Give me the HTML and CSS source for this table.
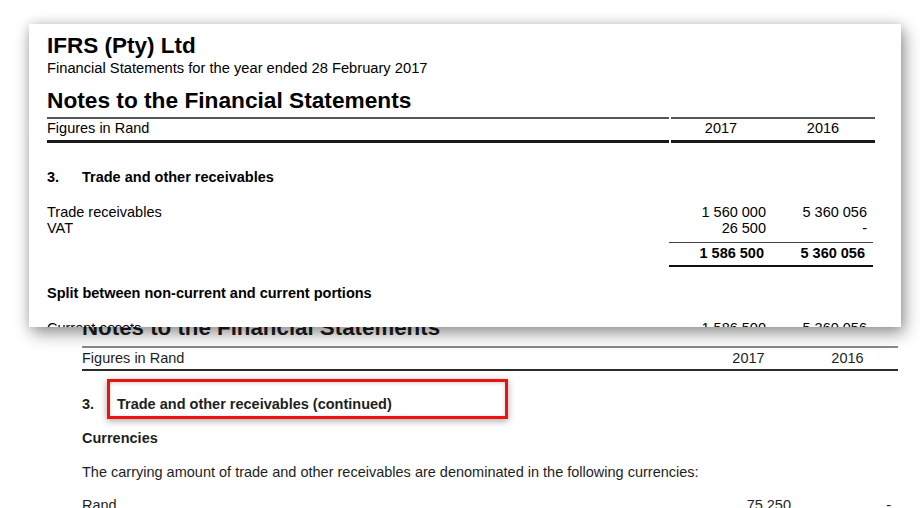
FILE: index.html
```html
<!DOCTYPE html>
<html lang="en">
<head>
<meta charset="utf-8">
<title>Notes to the Financial Statements</title>
<link rel="stylesheet" href="styles.css">
</head>
<body>
<div class="stage">
  <div class="doc back">
    <h2 class="back-title">Notes to the Financial Statements</h2>
    <div class="grid back-head">
      <div class="c1">Figures in Rand</div>
      <div class="c2 yr">2017</div>
      <div class="c3 yr">2016</div>
    </div>
    <div class="note-title back-note"><span class="num">3.</span><span>Trade and other receivables (continued)</span></div>
    <div class="sub back-sub">Currencies</div>
    <p class="para">The carrying amount of trade and other receivables are denominated in the following currencies:</p>
    <div class="grid back-row">
      <div class="c1">Rand</div>
      <div class="c2 n">75 250</div>
      <div class="c3 n">-</div>
    </div>
    <div class="highlight"></div>
  </div>

  <div class="card">
    <div class="doc front">
      <div class="company">IFRS (Pty) Ltd</div>
      <div class="subtitle">Financial Statements for the year ended 28 February 2017</div>
      <h1 class="title">Notes to the Financial Statements</h1>
      <div class="grid head">
        <div class="c1 hc1">Figures in Rand</div>
        <div class="c2 yr">2017</div>
        <div class="c3 yr">2016</div>
      </div>
      <div class="note-title front-note"><span class="num">3.</span><span>Trade and other receivables</span></div>
      <div class="lines">
        <div class="grid row">
          <div class="c1">Trade receivables</div>
          <div class="c2 n">1 560 000</div>
          <div class="c3 n">5 360 056</div>
        </div>
        <div class="grid row">
          <div class="c1">VAT</div>
          <div class="c2 n">26 500</div>
          <div class="c3 n">-</div>
        </div>
        <div class="grid row total">
          <div class="c1"></div>
          <div class="totals">
            <div class="c2 n">1 586 500</div>
            <div class="c3 n">5 360 056</div>
          </div>
        </div>
      </div>
      <div class="sub front-sub">Split between non-current and current portions</div>
      <div class="grid row cut">
        <div class="c1">Current assets</div>
        <div class="c2 n">1 586 500</div>
        <div class="c3 n">5 360 056</div>
      </div>
    </div>
  </div>
</div>
</body>
</html>
```

FILE: styles.css
```css
* { box-sizing: border-box; }
html, body {
  margin: 0;
  padding: 0;
  background: #ffffff;
}
body {
  width: 920px;
  height: 508px;
  overflow: hidden;
  font-family: "Liberation Sans", Arial, sans-serif;
}
.stage {
  position: relative;
  width: 920px;
  height: 508px;
}

/* ---------- shared ---------- */
.grid {
  display: grid;
  font-size: 14.5px;
  line-height: 16px;
}
.n { text-align: right; }
.yr { text-align: center; }
.note-title {
  display: flex;
  font-weight: bold;
  font-size: 14.5px;
  line-height: 16px;
}
.sub {
  font-weight: bold;
  font-size: 14.5px;
  line-height: 16px;
}

/* ---------- back document ---------- */
.back {
  position: relative;
  padding: 315px 22px 0 82px;
  color: #1e1e1e;
}
.back .grid { grid-template-columns: 618px 97px 101px; }
.back .n.c2 { padding-right: 6px; }
.back .n.c3 { padding-right: 7px; }
.back-title {
  margin: 0;
  font-size: 22.3px;
  line-height: 26px;
  font-weight: bold;
}
.back-head {
  margin-top: 5px;
  border-top: 2px solid #8a8a8a;
  border-bottom: 2px solid #2a2a2a;
  padding: 2px 0 3px;
}
.back-note { margin-top: 25px; }
.back-note .num { width: 35px; }
.back-sub { margin-top: 18px; }
.para {
  margin: 18px 0 0;
  font-size: 14.5px;
  line-height: 16px;
}
.back-row { margin-top: 17px; }
.highlight {
  position: absolute;
  left: 107px;
  top: 379px;
  width: 401px;
  height: 40px;
  border: 3px solid #ee1111;
  box-shadow: 0 2px 7px rgba(0, 0, 0, 0.35), inset 0 1px 4px rgba(0, 0, 0, 0.18);
}

/* ---------- front card ---------- */
.card {
  position: absolute;
  left: 29px;
  top: 24px;
  width: 872px;
  height: 303px;
  background: #ffffff;
  overflow: hidden;
  box-shadow: 3px 6px 16px rgba(0, 0, 0, 0.42), 0 0 10px rgba(0, 0, 0, 0.12);
  z-index: 2;
}
.front {
  padding: 10px 26px 0 18px;
  color: #000;
}
.front .grid { grid-template-columns: 624px 100px 104px; }
.front .n.c2 { padding-right: 5px; }
.front .n.c3 { padding-right: 8px; }
.company {
  font-size: 22.5px;
  line-height: 24px;
  font-weight: bold;
}
.subtitle {
  margin-top: 2px;
  font-size: 14.7px;
  line-height: 16px;
}
.title {
  margin: 11px 0 0;
  font-size: 22.7px;
  line-height: 26px;
  font-weight: bold;
}
.head {
  margin-top: 4px;
}
.head > div {
  border-top: 2px solid #555;
  border-bottom: 3px solid #1a1a1a;
  padding: 1px 0 4px;
}
.head .hc1 { margin-right: 2px; }
.front-note { margin-top: 26px; }
.front-note .num { width: 35px; }
.lines { margin-top: 19px; }
.total { font-weight: bold; }
.totals {
  grid-column: 2 / 4;
  display: grid;
  grid-template-columns: 100px 104px;
  border-top: 1px solid #444;
  border-bottom: 2px solid #111;
  padding: 2px 0 4px;
  margin-top: 6px;
  margin-right: 2px;
  margin-left: -2px;
}
.totals .c2 { padding-right: 1px; }
.front-sub { margin-top: 18px; }
.cut { margin-top: 19px; }
```
